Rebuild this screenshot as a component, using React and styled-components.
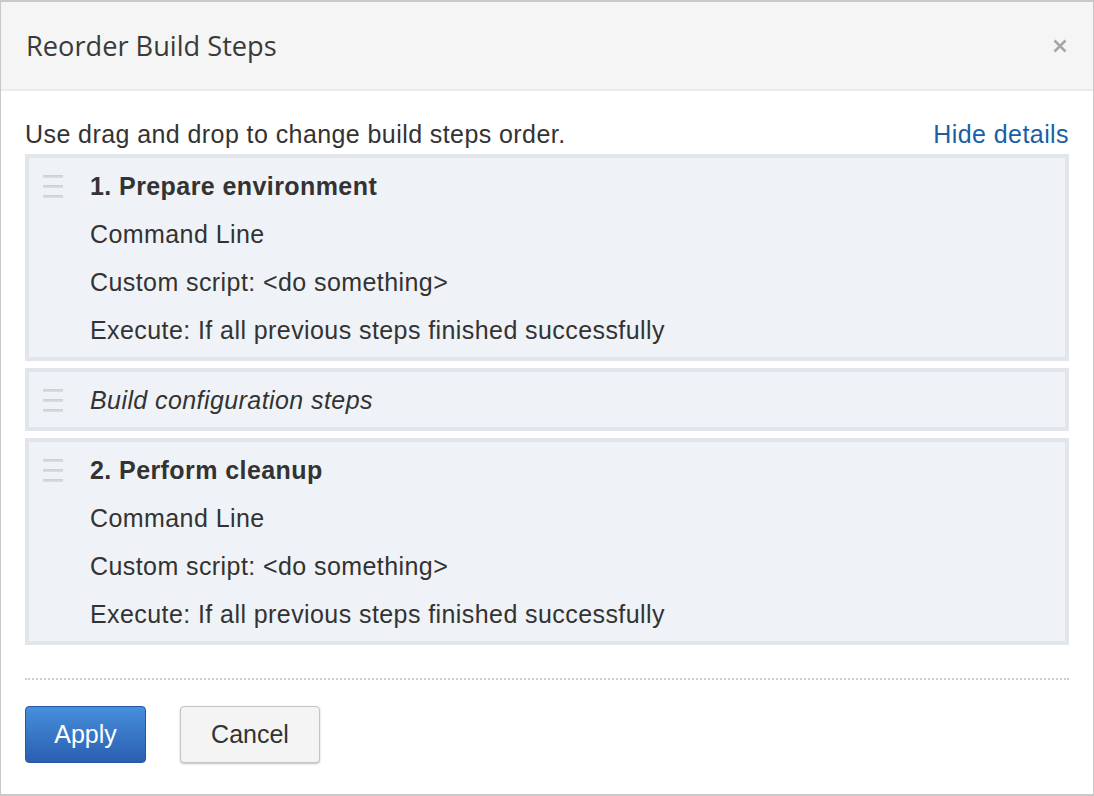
import styled, { createGlobalStyle } from "styled-components";

const Global = createGlobalStyle`
  html, body {
    margin: 0;
    padding: 0;
    background: #fff;
  }
  * {
    box-sizing: border-box;
  }
`;

const Dialog = styled.div`
  width: 1094px;
  height: 796px;
  display: flex;
  flex-direction: column;
  border: 1px solid #c8c8c8;
  border-top-width: 2px;
  border-bottom-width: 2px;
  background: #fff;
  font-family: "Liberation Sans", Arial, sans-serif;
  color: #333;
`;

const Header = styled.div`
  height: 89px;
  flex-shrink: 0;
  display: flex;
  align-items: center;
  justify-content: space-between;
  padding: 0 25px 0 25px;
  background: #f5f5f5;
  border-bottom: 2px solid #ebebeb;
`;

const Title = styled.h1`
  margin: 0;
  font-family: "Open Sans", "Noto Sans", sans-serif;
  font-weight: 400;
  font-size: 27.2px;
  color: #3a3a3a;
`;

const Close = styled.button`
  border: none;
  background: none;
  padding: 0;
  margin-right: 1px;
  width: 14px;
  height: 14px;
  display: flex;
  cursor: pointer;
`;

const Body = styled.div`
  padding: 28px 24px 0 24px;
  display: flex;
  flex-direction: column;
`;

const Intro = styled.div`
  display: flex;
  justify-content: space-between;
  align-items: center;
  font-size: 25px;
  letter-spacing: 0.42px;
  line-height: 30px;
  margin-bottom: 5px;
`;

const Link = styled.a`
  color: #1a5fa3;
  text-decoration: none;
  cursor: pointer;
`;

const StepList = styled.div`
  display: flex;
  flex-direction: column;
  gap: 7px;
`;

const Step = styled.div`
  display: flex;
  align-items: flex-start;
  padding: 4px 0 3px 14px;
  background: #eff2f6;
  border: 4px solid #e2e6ec;
`;

const Handle = styled.div`
  width: 20px;
  height: 48px;
  margin-right: 27px;
  flex-shrink: 0;
  display: flex;
  flex-direction: column;
  justify-content: center;
  gap: 7px;
`;

const Bar = styled.span`
  display: block;
  height: 3px;
  background: linear-gradient(#cbced2, #dcdfe3);
`;

const StepBody = styled.div`
  display: flex;
  flex-direction: column;
  font-size: 25px;
  letter-spacing: 0.42px;
  line-height: 48px;
`;

const StepTitle = styled.div`
  font-weight: ${(p) => (p.$italic ? 400 : 700)};
  font-style: ${(p) => (p.$italic ? "italic" : "normal")};
`;

const Detail = styled.div``;

const Footer = styled.div`
  margin: 33px 24px 0 24px;
  padding-top: 26px;
  border-top: 2px dotted #cdcdcd;
  display: flex;
  gap: 34px;
`;

const Button = styled.button`
  height: 57px;
  width: ${(p) => (p.$primary ? 121 : 140)}px;
  padding: 0;
  font-family: "Liberation Sans", Arial, sans-serif;
  font-size: 25px;
  border-radius: 4px;
  cursor: pointer;
  color: ${(p) => (p.$primary ? "#fff" : "#333")};
  background: ${(p) =>
    p.$primary ? "linear-gradient(#4690db, #2b5eb0)" : "#f4f4f4"};
  border: ${(p) => (p.$primary ? "1px solid #2856a3" : "1px solid #c4c4c4")};
  box-shadow: ${(p) =>
    p.$primary ? "none" : "0 1px 2px rgba(0,0,0,0.25)"};
`;

const HandleIcon = () => (
  <Handle>
    <Bar />
    <Bar />
    <Bar />
  </Handle>
);

const steps = [
  { title: "1. Prepare environment", details: true },
  { title: "Build configuration steps", italic: true },
  { title: "2. Perform cleanup", details: true },
];

export default function App() {
  return (
    <>
      <Global />
      <Dialog>
        <Header>
          <Title>Reorder Build Steps</Title>
          <Close aria-label="Close">
            <svg width="14" height="14" viewBox="0 0 14 14">
              <path
                d="M1.5 1.5 L12.5 12.5 M12.5 1.5 L1.5 12.5"
                stroke="#a6a6a6"
                strokeWidth="2.6"
              />
            </svg>
          </Close>
        </Header>
        <Body>
          <Intro>
            <span>Use drag and drop to change build steps order.</span>
            <Link>Hide details</Link>
          </Intro>
          <StepList>
            {steps.map((s) => (
              <Step key={s.title}>
                <HandleIcon />
                <StepBody>
                  <StepTitle $italic={s.italic}>{s.title}</StepTitle>
                  {s.details && (
                    <>
                      <Detail>Command Line</Detail>
                      <Detail>Custom script: &lt;do something&gt;</Detail>
                      <Detail>
                        Execute: If all previous steps finished successfully
                      </Detail>
                    </>
                  )}
                </StepBody>
              </Step>
            ))}
          </StepList>
        </Body>
        <Footer>
          <Button $primary>Apply</Button>
          <Button>Cancel</Button>
        </Footer>
      </Dialog>
    </>
  );
}
